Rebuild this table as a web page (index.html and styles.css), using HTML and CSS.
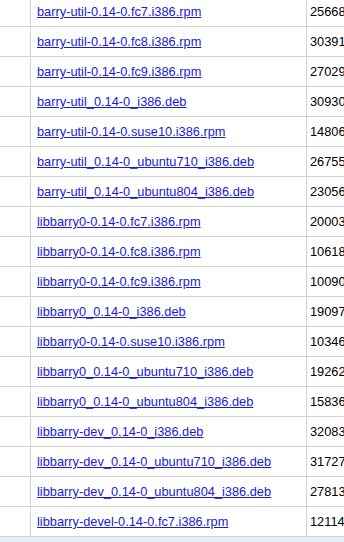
FILE: index.html
```html
<!DOCTYPE html>
<html>
<head>
<meta charset="utf-8">
<link rel="stylesheet" href="styles.css">
</head>
<body>
<div class="wrap">
<table class="files">
<tbody>
<tr><td class="c1"></td><td class="c2"><a href="#">barry-util-0.14-0.fc7.i386.rpm</a></td><td class="c3">25668</td></tr>
<tr><td class="c1"></td><td class="c2"><a href="#">barry-util-0.14-0.fc8.i386.rpm</a></td><td class="c3">30391</td></tr>
<tr><td class="c1"></td><td class="c2"><a href="#">barry-util-0.14-0.fc9.i386.rpm</a></td><td class="c3">27029</td></tr>
<tr><td class="c1"></td><td class="c2"><a href="#">barry-util_0.14-0_i386.deb</a></td><td class="c3">30930</td></tr>
<tr><td class="c1"></td><td class="c2"><a href="#">barry-util-0.14-0.suse10.i386.rpm</a></td><td class="c3">14806</td></tr>
<tr><td class="c1"></td><td class="c2"><a href="#">barry-util_0.14-0_ubuntu710_i386.deb</a></td><td class="c3">26755</td></tr>
<tr><td class="c1"></td><td class="c2"><a href="#">barry-util_0.14-0_ubuntu804_i386.deb</a></td><td class="c3">23056</td></tr>
<tr><td class="c1"></td><td class="c2"><a href="#">libbarry0-0.14-0.fc7.i386.rpm</a></td><td class="c3">20003</td></tr>
<tr><td class="c1"></td><td class="c2"><a href="#">libbarry0-0.14-0.fc8.i386.rpm</a></td><td class="c3">10618</td></tr>
<tr><td class="c1"></td><td class="c2"><a href="#">libbarry0-0.14-0.fc9.i386.rpm</a></td><td class="c3">10090</td></tr>
<tr><td class="c1"></td><td class="c2"><a href="#">libbarry0_0.14-0_i386.deb</a></td><td class="c3">19097</td></tr>
<tr><td class="c1"></td><td class="c2"><a href="#">libbarry0-0.14-0.suse10.i386.rpm</a></td><td class="c3">10346</td></tr>
<tr><td class="c1"></td><td class="c2"><a href="#">libbarry0_0.14-0_ubuntu710_i386.deb</a></td><td class="c3">19262</td></tr>
<tr><td class="c1"></td><td class="c2"><a href="#">libbarry0_0.14-0_ubuntu804_i386.deb</a></td><td class="c3">15836</td></tr>
<tr><td class="c1"></td><td class="c2"><a href="#">libbarry-dev_0.14-0_i386.deb</a></td><td class="c3">32083</td></tr>
<tr><td class="c1"></td><td class="c2"><a href="#">libbarry-dev_0.14-0_ubuntu710_i386.deb</a></td><td class="c3">31727</td></tr>
<tr><td class="c1"></td><td class="c2"><a href="#">libbarry-dev_0.14-0_ubuntu804_i386.deb</a></td><td class="c3">27813</td></tr>
<tr><td class="c1"></td><td class="c2"><a href="#">libbarry-devel-0.14-0.fc7.i386.rpm</a></td><td class="c3">12114</td></tr>
</tbody>
</table>
<div class="footer"></div>
</div>
</body>
</html>
```
FILE: styles.css
```css
html, body {
  margin: 0;
  padding: 0;
  overflow: hidden;
  background: #ffffff;
}
body {
  font-family: "Liberation Sans", Arial, sans-serif;
  font-size: 12.8px;
  color: #000;
}
.wrap {
  width: 344px;
  height: 542px;
  overflow: hidden;
}
.files {
  border-collapse: collapse;
  table-layout: fixed;
  width: 400px;
  margin-top: -3px;
}
.files td {
  height: 29px;
  padding: 0;
  border-bottom: 1px solid #d3d3d3;
  vertical-align: middle;
  white-space: nowrap;
  overflow: hidden;
}
.c1 {
  width: 30px;
  border-right: 1px solid #d3d3d3;
}
.files td.c2 {
  width: 269px;
  padding-left: 6px;
  border-right: 1px solid #d3d3d3;
}
.files td.c3 {
  padding-left: 3px;
}
.c2 a {
  color: #1a1ad8;
  text-decoration: underline;
}
.footer {
  height: 40px;
  background: #e8eef7;
}
```
